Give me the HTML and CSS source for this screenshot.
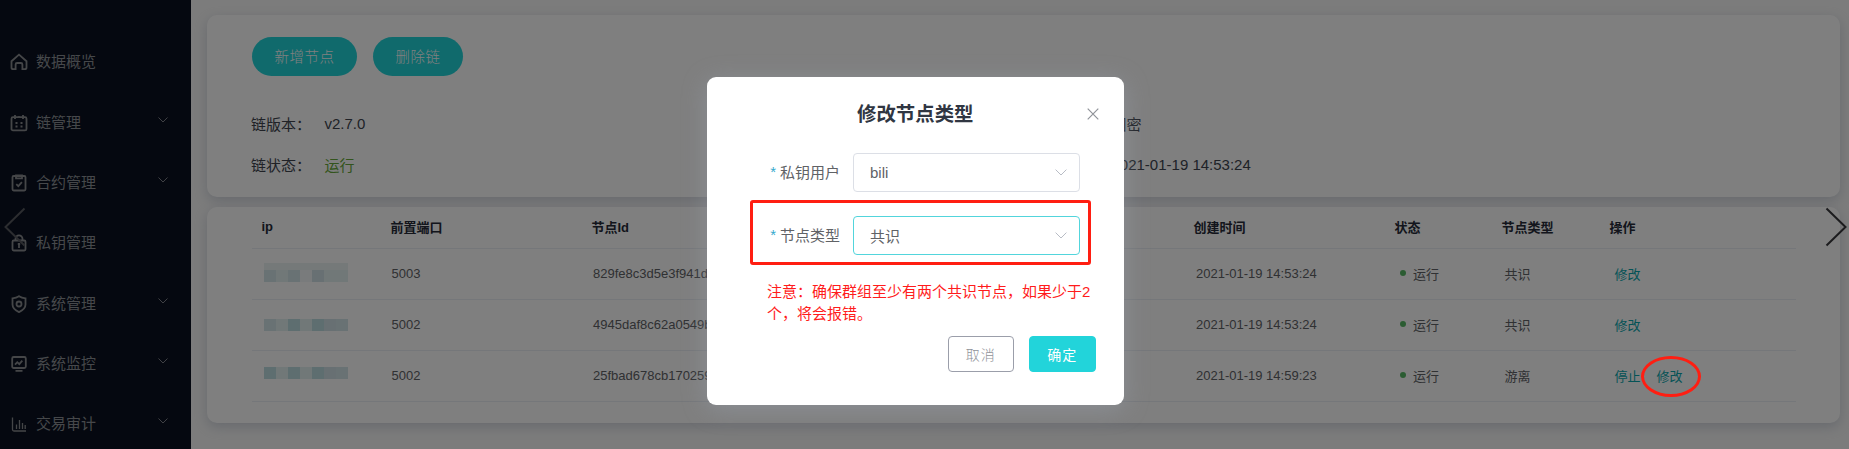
FILE: index.html
```html
<!DOCTYPE html>
<html lang="zh-CN">
<head>
<meta charset="utf-8">
<title>修改节点类型</title>
<link rel="stylesheet" href="styles.css">
</head>
<body>
<div class="app">
  <nav class="sidebar">
    <div class="nav-item"><svg class="nav-icon" viewBox="0 0 18 18"><path d="M5.6 16.2H3.2a1.700 1.700 0 0 1-1.700-1.700V8.200L9 1.600l7.500 6.600v6.300a1.700 1.700 0 0 1-1.700 1.700h-2.400V11.500a1.500 1.500 0 0 0-1.500-1.500H7.100a1.500 1.500 0 0 0-1.500 1.500z"/></svg><span>数据概览</span></div>
    <div class="nav-item"><svg class="nav-icon" viewBox="0 0 18 18"><rect x="1.500" y="3.200" width="15" height="13.200" rx="1.500"/><path d="M5 1v4M13 1v4M8 3.200h2M5.500 9h2M10.500 9h2M5.500 12.500h2M10.500 12.500h2"/></svg><span>链管理</span><svg class="nav-arrow" viewBox="0 0 10 6"><path d="M.5.5 5 5 9.500.5"/></svg></div>
    <div class="nav-item"><svg class="nav-icon" viewBox="0 0 18 18"><rect x="2.500" y="2" width="13" height="14.500" rx="1.200"/><path d="M6 1.500h6v2.800H6zM6.300 10.200l2 1.900 3.600-3.900"/></svg><span>合约管理</span><svg class="nav-arrow" viewBox="0 0 10 6"><path d="M.5.5 5 5 9.500.5"/></svg></div>
    <div class="nav-item"><svg class="nav-icon" viewBox="0 0 18 18"><rect x="2.500" y="6.500" width="13" height="10" rx="1.200"/><path d="M5.500 6.500V4.800a3.500 3.500 0 0 1 7 0v1.700M7.800 10h2.400M9 10v4"/></svg><span>私钥管理</span></div>
    <div class="nav-item"><svg class="nav-icon" viewBox="0 0 18 18"><path d="M9 1.200c2 1.400 4.200 2 6.500 2.200v6c0 3.400-2.700 5.800-6.500 7.700-3.800-1.900-6.500-4.300-6.500-7.700v-6C4.800 3.200 7 2.600 9 1.200z"/><circle cx="9" cy="9" r="2.500"/></svg><span>系统管理</span><svg class="nav-arrow" viewBox="0 0 10 6"><path d="M.5.5 5 5 9.500.5"/></svg></div>
    <div class="nav-item"><svg class="nav-icon" viewBox="0 0 18 18"><rect x="2.200" y="2" width="13.600" height="11" rx="1.500"/><path d="m5 9.700 2.300-2.500 2 2 3-3.500M5.500 15.800h7"/></svg><span>系统监控</span><svg class="nav-arrow" viewBox="0 0 10 6"><path d="M.5.5 5 5 9.500.5"/></svg></div>
    <div class="nav-item"><svg class="nav-icon thin" viewBox="0 0 18 18"><path d="M2.500 2.500v12a1.500 1.500 0 0 0 1.500 1.500h12M6.500 9.500V14M9.500 5v9M12.500 8v6M15.200 10v4"/></svg><span>交易审计</span><svg class="nav-arrow" viewBox="0 0 10 6"><path d="M.5.5 5 5 9.500.5"/></svg></div>
  </nav>
  <main class="content">
    <section class="card summary">
      <div class="actions"><button class="pill">新增节点</button><button class="pill">删除链</button></div>
      <dl class="facts">
        <dt>链版本：</dt><dd>v2.7.0</dd><dt>加密类型：</dt><dd>国密</dd>
        <dt>链状态：</dt><dd class="ok">运行</dd><dt>创建时间：</dt><dd>2021-01-19 14:53:24</dd>
      </dl>
    </section>
    <section class="card table">
      <div class="row head"><span class="ip">ip</span><span>前置端口</span><span>节点Id</span><span>创建时间</span><span>状态</span><span>节点类型</span><span>操作</span></div>
      <div class="row"><span class="mask first"><i class="a"></i><i class="b"></i><i class="a"></i><i class="c"></i><i class="d"></i><i class="b"></i><i class="b"></i></span><span>5003</span><span>829fe8c3d5e3f941d</span><span>2021-01-19 14:53:24</span><span class="state">运行</span><span>共识</span><span class="links"><a>修改</a></span></div>
      <div class="row"><span class="mask second"><i class="a"></i><i class="b"></i><i class="e"></i><i class="b"></i><i class="e"></i><i class="d"></i><i class="a"></i></span><span>5002</span><span>4945daf8c62a0549b</span><span>2021-01-19 14:53:24</span><span class="state">运行</span><span>共识</span><span class="links"><a>修改</a></span></div>
      <div class="row"><span class="mask third"><i class="e"></i><i class="b"></i><i class="e"></i><i class="b"></i><i class="e"></i><i class="d"></i><i class="a"></i></span><span>5002</span><span>25fbad678cb170259</span><span>2021-01-19 14:59:23</span><span class="state">运行</span><span>游离</span><span class="links"><a>停止</a><a>修改</a></span></div>
    </section>
  </main>
</div>
<div class="overlay">
  <div class="dialog">
    <header class="dialog-head"><h1>修改节点类型</h1><svg class="close" viewBox="0 0 12 12"><path d="m.7.7 10.600 10.600M11.300.7.700 11.300"/></svg></header>
    <div class="field"><label><b>*</b>私钥用户</label><div class="select"><span>bili</span><svg viewBox="0 0 12 7"><path d="M.6.6 6 6 11.400.6"/></svg></div></div>
    <div class="field"><label><b>*</b>节点类型</label><div class="select focus"><span>共识</span><svg viewBox="0 0 12 7"><path d="M.6.6 6 6 11.400.6"/></svg></div></div>
    <p class="notice">注意：确保群组至少有两个共识节点，如果少于2个，将会报错。</p>
    <footer class="buttons"><button class="btn">取消</button><button class="btn primary">确定</button></footer>
    <div class="mark-box"></div>
  </div>
</div>
<svg class="slide prev" viewBox="0 0 22 40"><path d="M20.500 1.500 1.500 20l19 18.500"/></svg>
<svg class="slide next" viewBox="0 0 22 40"><path d="M1.500 1.500 20.500 20l-19 18.500"/></svg>
<div class="mark-circle"></div>
</body>
</html>
```
FILE: styles.css
```css
* { box-sizing: border-box; }
body {
  margin: 0;
  height: 449px;
  overflow: hidden;
  position: relative;
  font-family: "Liberation Sans", "Noto Sans CJK SC", sans-serif;
  font-size: 15px;
  color: #606266;
}
button { font-family: inherit; border: 0; padding: 0; }
svg { fill: none; }
.app { display: flex; height: 449px; background: #f8f8f8; }

.sidebar { width: 191px; flex: none; padding-top: 32.300px; background: #0a1120; color: #8d9096; }
.nav-item { display: flex; align-items: center; height: 60.300px; padding: 0 23px 0 10px; }
.nav-item span { flex: 1; margin-left: 8px; line-height: 20px; }
.nav-icon { width: 18px; height: 18px; stroke: #8b8d91; stroke-width: 1.800; }
.nav-icon.thin { stroke-width: 1.300; }
.nav-arrow { width: 10px; height: 6px; margin-bottom: 6px; stroke: #80838a; }

.content { flex: 1; padding: 15px 9px 0 16px; }
.card { background: #fff; border-radius: 10px; box-shadow: 0 4px 12px rgba(159, 169, 186, .45); }
.summary { height: 182px; padding: 22px 44px 0; }
.actions { display: flex; gap: 16px; padding-left: .500px; }
.pill {
  height: 38.500px;
  padding: 0 22px 1px 23px;
  border-radius: 20px;
  background: #20d4d9;
  color: #fff;
  font-size: 14.500px;
  font-weight: 300;
  letter-spacing: .5px;
}
.facts { display: grid; grid-template-columns: 73.500px 712px 75px 1fr; grid-auto-rows: 41px; align-items: center; margin: 27px 0 0; color: #40454f; }
.facts dt, .facts dd { margin: 0; white-space: nowrap; }
.facts .ok { color: #67a83a; }

.table { height: 216px; margin-top: 10px; padding: 0 44px 0 45px; }
.row {
  display: grid;
  grid-template-columns: 131px 201.500px 603px 204px 104.500px 110px 1fr;
  align-items: center;
  height: 51px;
  padding: 0 0 1px 8.500px;
  border-bottom: 1px solid #ebeef5;
  font-size: 13px;
}
.head {
  height: 41.500px;
  padding-bottom: 2px;
  grid-template-columns: 130px 201px 602px 201px 107px 108px 1fr;
  color: #262b38;
  font-weight: 700;
}
.ip { padding-left: 1px; }
.state { display: flex; align-items: center; gap: 7px; }
.state::before { content: ""; width: 6px; height: 6px; border-radius: 50%; background: #57b865; }
.links { display: flex; gap: 16px; color: #08a6ad; }
.mask { display: flex; height: 12px; margin: 1px 0 0 3px; }
.mask.first { height: 19px; margin-top: -2px; }
.mask.first i { border-top: 7px solid #eaf3f3; }
.mask.third { margin-top: -5px; }
.mask i { width: 12px; }
.mask .a { background: #d2e5e9; }
.mask .b { background: #e2f1f1; }
.mask .c { background: #f3f6f8; }
.mask .d { background: #d0e1e6; }
.mask .e { background: #bddde1; }

.overlay {
  position: absolute;
  inset: 0;
  padding: 77px 0 0 706.500px;
  background: rgba(0, 0, 0, .5);
}
.dialog {
  position: relative;
  width: 417.500px;
  height: 328px;
  padding: 18px 28.500px 0 60.500px;
  border-radius: 9px;
  background: #fff;
  box-shadow: 0 4px 24px rgba(159, 169, 186, .4);
}
.dialog-head { display: flex; align-items: center; height: 38px; margin-bottom: 20px; }
h1 { flex: 1; margin: 0; padding-right: 23px; text-align: center; font-size: 19.400px; line-height: 28px; color: #303642; }
.close { width: 12px; height: 12px; margin-right: -3px; stroke: #909399; stroke-width: 1.200; }
.field { display: flex; height: 38.500px; margin-bottom: 24.500px; }
label { display: flex; align-items: center; justify-content: flex-end; width: 73px; padding-bottom: 1px; white-space: nowrap; }
label b { margin-right: 4px; color: #35a9cd; font-weight: 400; }
.select {
  display: flex;
  align-items: center;
  justify-content: space-between;
  flex: none;
  width: 226.500px;
  margin-left: 13px;
  padding: 0 12px 0 16px;
  border: 1px solid #dcdfe6;
  border-radius: 4px;
}
.select.focus { border-color: #52d5dc; }
.select svg { width: 12px; height: 7px; stroke: #b8bcc5; }
.notice { margin: 0 0 10.500px; padding-top: 1.500px; color: #ff1c1c; line-height: 22.300px; width: 326px; }
.buttons { display: flex; justify-content: flex-end; gap: 15px; }
.btn {
  width: 66.500px;
  height: 36px;
  border: 1px solid #9b9eaa;
  border-radius: 4px;
  background: #fff;
  color: #909399;
  font-size: 14px;
  font-weight: 300;
  letter-spacing: 1px;
}
.btn.primary { border-color: #22d4da; background: #22d4da; color: #fff; font-weight: 400; }

/* Annotations and carousel arrows lie over the page */
.mark-box { position: absolute; left: 43px; top: 123px; width: 341px; height: 65px; border: 3px solid #ff1e12; border-radius: 3px; }
.mark-circle { position: absolute; left: 1641px; top: 356px; width: 60px; height: 41px; border: 3px solid #ff1e12; border-radius: 50%; }
.slide { position: absolute; top: 207px; width: 22px; height: 40px; stroke-width: 2; }
.prev { left: 4px; stroke: #2c2d30; }
.next { left: 1825px; stroke: #1c1c1e; }
```
